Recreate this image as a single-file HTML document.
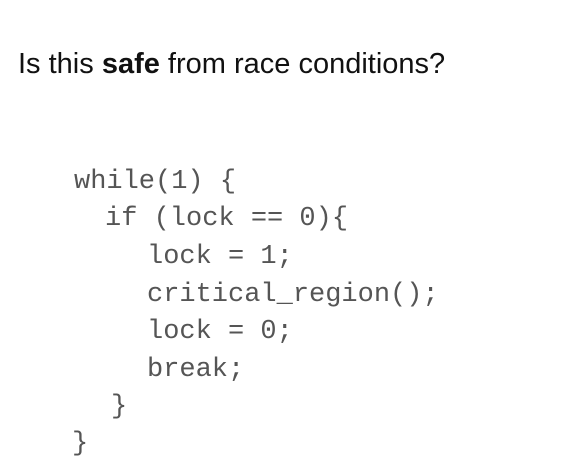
<!DOCTYPE html>
<html><head><style>
html,body{margin:0;padding:0;background:#fff;width:572px;height:466px;overflow:hidden;position:relative}
.t{position:absolute;left:18px;top:48px;font:29px "Liberation Sans",sans-serif;color:#111;white-space:nowrap}
.c{position:absolute;font:27px "Liberation Mono",monospace;color:#555;white-space:pre;line-height:30px}
</style></head><body>
<div class="t">Is this <b>safe</b> from race conditions?</div>
<div class="c" style="left:74px;top:167px">while(1) {</div>
<div class="c" style="left:105px;top:204px">if (lock == 0){</div>
<div class="c" style="left:147px;top:242px">lock = 1;</div>
<div class="c" style="left:147px;top:280px">critical_region();</div>
<div class="c" style="left:147px;top:317px">lock = 0;</div>
<div class="c" style="left:147px;top:355px">break;</div>
<div class="c" style="left:111px;top:392px">}</div>
<div class="c" style="left:72px;top:429px">}</div>
</body></html>
